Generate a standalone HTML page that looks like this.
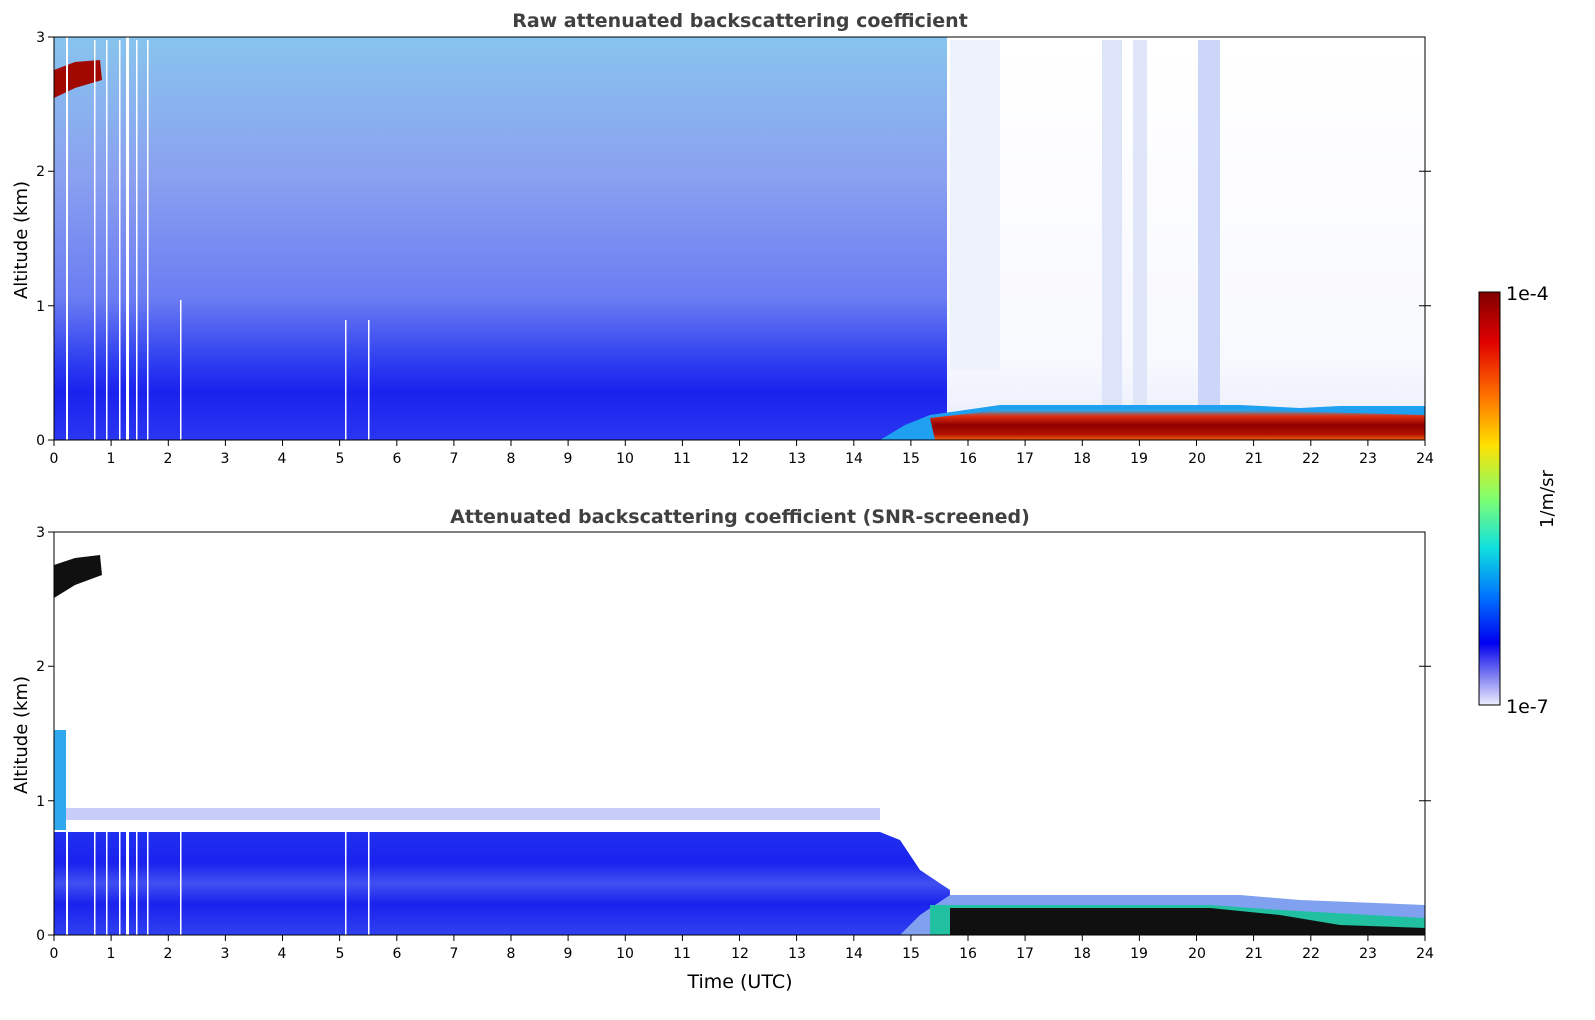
<!DOCTYPE html>
<html><head><meta charset="utf-8"><style>
html,body{margin:0;padding:0;background:#fff;width:1595px;height:1020px;overflow:hidden}
svg text{font-family:"DejaVu Sans","Liberation Sans",sans-serif}
</style></head><body>
<svg width="1595" height="1020" viewBox="0 0 1595 1020" xmlns="http://www.w3.org/2000/svg">
<defs>
<linearGradient id="rawL" x1="0" y1="0" x2="0" y2="1">
<stop offset="0" stop-color="#88c4ee"/>
<stop offset="0.35" stop-color="#8aa0f0"/>
<stop offset="0.65" stop-color="#6a7cf2"/>
<stop offset="0.8" stop-color="#3040f0"/>
<stop offset="0.88" stop-color="#1a22ee"/>
<stop offset="1" stop-color="#2a36f0"/>
</linearGradient>
<linearGradient id="rawR" x1="0" y1="0" x2="0" y2="1">
<stop offset="0" stop-color="#fff"/>
<stop offset="0.8" stop-color="#f8f9fe"/>
<stop offset="1" stop-color="#e8ebfc"/>
</linearGradient>
<linearGradient id="red" x1="0" y1="0" x2="0" y2="1">
<stop offset="0" stop-color="#20b0f0"/>
<stop offset="0.2" stop-color="#e03010"/>
<stop offset="0.5" stop-color="#900000"/>
<stop offset="0.8" stop-color="#b01000"/>
<stop offset="1" stop-color="#f06010"/>
</linearGradient>
<linearGradient id="snr" x1="0" y1="0" x2="0" y2="1">
<stop offset="0" stop-color="#2030f0"/>
<stop offset="0.3" stop-color="#1a22ee"/>
<stop offset="0.5" stop-color="#4050f0"/>
<stop offset="0.7" stop-color="#1a22ee"/>
<stop offset="1" stop-color="#3040f0"/>
</linearGradient>
<linearGradient id="cb" x1="0" y1="0" x2="0" y2="1">
<stop offset="0" stop-color="#800000"/>
<stop offset="0.12" stop-color="#e00000"/>
<stop offset="0.25" stop-color="#ff7000"/>
<stop offset="0.37" stop-color="#ffe000"/>
<stop offset="0.5" stop-color="#80ff70"/>
<stop offset="0.62" stop-color="#10e0e0"/>
<stop offset="0.74" stop-color="#0070ff"/>
<stop offset="0.85" stop-color="#0000f0"/>
<stop offset="0.93" stop-color="#8080f0"/>
<stop offset="1" stop-color="#eeeeff"/>
</linearGradient>
</defs>

<text x="740" y="27" text-anchor="middle" font-size="19" font-weight="bold" fill="#404040">Raw attenuated backscattering coefficient</text>
<rect x="54" y="37" width="893" height="403" fill="url(#rawL)"/>
<rect x="947" y="37" width="478" height="403" fill="url(#rawR)"/>
<rect x="1102" y="40" width="20" height="370" fill="#dde4fa"/>
<rect x="1133" y="40" width="14" height="370" fill="#e0e6fa"/>
<rect x="1198" y="40" width="22" height="370" fill="#ccd6f8"/>
<rect x="950" y="40" width="50" height="330" fill="#eef2fc"/>
<path d="M930 415 L1000 405 L1240 405 L1300 408 L1340 406 L1425 406 L1425 440 L880 440 L905 425 Z" fill="#20a0f0"/>
<path d="M930 418 L1000 410 L1240 410 L1425 415 L1425 440 L935 440 Z" fill="url(#red)"/>
<path d="M54 70 L75 62 L100 60 L102 80 L75 88 L54 98 Z" fill="#a00800"/>
<g fill="#fff"><rect x="66" y="37" width="2" height="403"/><rect x="94" y="40" width="1.5" height="400"/><rect x="106" y="40" width="1.5" height="400"/><rect x="119" y="40" width="1.5" height="400"/><rect x="126" y="37" width="3" height="403"/><rect x="136" y="40" width="1.5" height="400"/><rect x="147" y="40" width="1.5" height="400"/><rect x="180" y="300" width="1.5" height="140"/><rect x="345" y="320" width="1.5" height="120"/><rect x="368" y="320" width="1.5" height="120"/></g>
<rect x="54" y="37" width="1371" height="403" fill="none" stroke="#000" stroke-width="1"/>

<text x="740" y="523" text-anchor="middle" font-size="19" font-weight="bold" fill="#404040">Attenuated backscattering coefficient (SNR-screened)</text>
<path d="M54 832 L880 832 L900 840 L920 870 L950 890 L950 935 L54 935 Z" fill="url(#snr)"/>
<rect x="60" y="808" width="820" height="12" fill="#c8ccf8"/>
<path d="M950 895 L1060 895 L1240 895 L1300 900 L1425 905 L1425 935 L900 935 L920 915 Z" fill="#80a0f0"/>
<path d="M930 905 L1210 905 L1280 910 L1425 918 L1425 935 L930 935 Z" fill="#20c0a0"/>
<path d="M950 908 L1210 908 L1280 915 L1340 925 L1425 928 L1425 935 L950 935 Z" fill="#101010"/>
<rect x="54" y="730" width="12" height="100" fill="#30a8f0"/>
<path d="M54 565 L75 558 L100 555 L102 575 L75 585 L54 598 Z" fill="#101010"/>
<g fill="#fff"><rect x="66" y="830" width="2" height="105"/><rect x="94" y="830" width="1.5" height="105"/><rect x="106" y="830" width="1.5" height="105"/><rect x="119" y="830" width="1.5" height="105"/><rect x="126" y="830" width="3" height="105"/><rect x="136" y="830" width="1.5" height="105"/><rect x="147" y="830" width="1.5" height="105"/><rect x="180" y="830" width="1.5" height="105"/><rect x="345" y="830" width="1.5" height="105"/><rect x="368" y="830" width="1.5" height="105"/></g>
<rect x="54" y="532" width="1371" height="403" fill="none" stroke="#000" stroke-width="1"/>

<g stroke="#000" stroke-width="1">
<path d="M54 440v6M111.1 440v6M168.3 440v6M225.4 440v6M282.5 440v6M339.6 440v6M396.8 440v6M453.9 440v6M511 440v6M568.1 440v6M625.3 440v6M682.4 440v6M739.5 440v6M796.6 440v6M853.8 440v6M910.9 440v6M968 440v6M1025.1 440v6M1082.3 440v6M1139.4 440v6M1196.5 440v6M1253.6 440v6M1310.8 440v6M1367.9 440v6M1425 440v6"/>
<path d="M54 935v6M111.1 935v6M168.3 935v6M225.4 935v6M282.5 935v6M339.6 935v6M396.8 935v6M453.9 935v6M511 935v6M568.1 935v6M625.3 935v6M682.4 935v6M739.5 935v6M796.6 935v6M853.8 935v6M910.9 935v6M968 935v6M1025.1 935v6M1082.3 935v6M1139.4 935v6M1196.5 935v6M1253.6 935v6M1310.8 935v6M1367.9 935v6M1425 935v6"/>
<path d="M48 440h6M48 305.7h6M48 171.3h6M48 37h6M1419 305.7h12M1419 171.3h12"/>
<path d="M48 935h6M48 800.7h6M48 666.3h6M48 532h6M1419 800.7h12M1419 666.3h12"/>
</g>
<g font-size="14" text-anchor="middle" fill="#000">
<text x="54" y="463">0</text><text x="111" y="463">1</text><text x="168" y="463">2</text><text x="225" y="463">3</text><text x="282" y="463">4</text><text x="340" y="463">5</text><text x="397" y="463">6</text><text x="454" y="463">7</text><text x="511" y="463">8</text><text x="568" y="463">9</text><text x="625" y="463">10</text><text x="682" y="463">11</text><text x="740" y="463">12</text><text x="797" y="463">13</text><text x="854" y="463">14</text><text x="911" y="463">15</text><text x="968" y="463">16</text><text x="1025" y="463">17</text><text x="1082" y="463">18</text><text x="1139" y="463">19</text><text x="1197" y="463">20</text><text x="1254" y="463">21</text><text x="1311" y="463">22</text><text x="1368" y="463">23</text><text x="1425" y="463">24</text>
<text x="54" y="958">0</text><text x="111" y="958">1</text><text x="168" y="958">2</text><text x="225" y="958">3</text><text x="282" y="958">4</text><text x="340" y="958">5</text><text x="397" y="958">6</text><text x="454" y="958">7</text><text x="511" y="958">8</text><text x="568" y="958">9</text><text x="625" y="958">10</text><text x="682" y="958">11</text><text x="740" y="958">12</text><text x="797" y="958">13</text><text x="854" y="958">14</text><text x="911" y="958">15</text><text x="968" y="958">16</text><text x="1025" y="958">17</text><text x="1082" y="958">18</text><text x="1139" y="958">19</text><text x="1197" y="958">20</text><text x="1254" y="958">21</text><text x="1311" y="958">22</text><text x="1368" y="958">23</text><text x="1425" y="958">24</text>
</g>
<g font-size="14" text-anchor="end">
<text x="45" y="445">0</text><text x="45" y="311">1</text><text x="45" y="176">2</text><text x="45" y="42">3</text>
<text x="45" y="940">0</text><text x="45" y="806">1</text><text x="45" y="671">2</text><text x="45" y="537">3</text>
</g>
<text transform="translate(27 240) rotate(-90)" font-size="18" text-anchor="middle">Altitude (km)</text>
<text transform="translate(27 735) rotate(-90)" font-size="18" text-anchor="middle">Altitude (km)</text>
<text x="740" y="988" font-size="19" text-anchor="middle">Time (UTC)</text>

<rect x="1479" y="292" width="21" height="413" fill="url(#cb)" stroke="#000" stroke-width="1"/>
<text x="1506" y="300" font-size="19">1e-4</text>
<text x="1506" y="713" font-size="19">1e-7</text>
<text transform="translate(1553 499) rotate(-90)" font-size="18" text-anchor="middle">1/m/sr</text>
</svg>
</body></html>
